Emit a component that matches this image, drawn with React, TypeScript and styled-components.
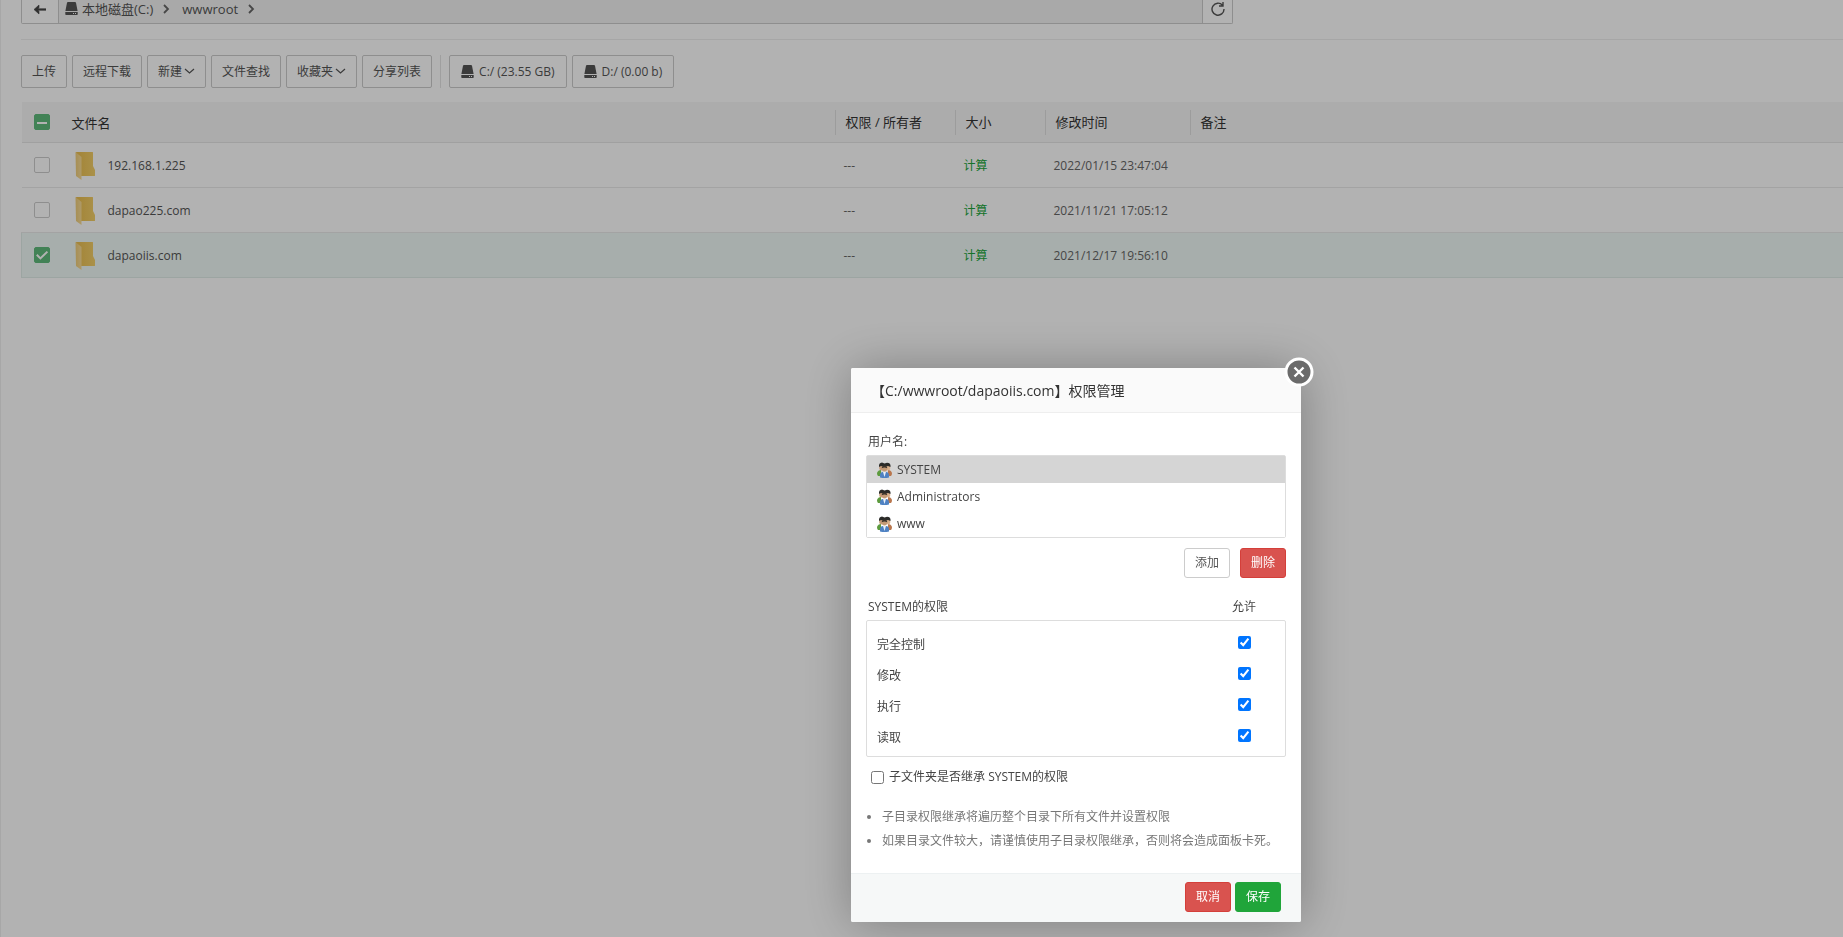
import React, { useState } from 'react';
import styled, { createGlobalStyle, css } from 'styled-components';

const Global = createGlobalStyle`
  * { box-sizing: border-box; }
  body {
    margin: 0;
    background: #fff;
    color: #666;
    font-family: "Open Sans", "Noto Sans CJK SC", sans-serif;
    font-size: 12px;
    line-height: 18px;
  }
  button, input { font: inherit; margin: 0; }
`;

const Page = styled.main`
  min-height: 100vh;
  padding-left: 20px;
  border-left: 1px solid #f0f0f0;
`;

const PathBar = styled.nav`
  display: flex;
  width: 1212px;
  max-width: 100%;
  height: 24px;
  border: 1px solid #ccc;
  border-top: 0;
  border-radius: 0 0 2px 2px;
`;

const PathButton = styled.button<{ $side: 'left' | 'right' }>`
  display: flex;
  justify-content: center;
  width: ${p => (p.$side === 'left' ? 37 : 30)}px;
  padding: 2px 0 0;
  border: 0;
  border-${p => (p.$side === 'left' ? 'right' : 'left')}: 1px solid #ccc;
  background: #fff;
`;

const Crumbs = styled.div`
  display: flex;
  flex: 1;
  align-items: flex-start;
  gap: 4px;
  padding-left: 6px;
  background: #f3f3f3;
  svg { margin-top: 2px; }
`;

const Crumb = styled.a`
  color: #555;
  font-size: 13px;
  text-decoration: none;
`;

const CrumbArrow = styled.svg`
  width: 12px;
  height: 14px;
  margin: 0 6px 0 3px;
`;

const Toolbar = styled.div`
  display: flex;
  gap: 5px;
  margin-top: 15px;
  padding: 15px 0 14px;
  border-top: 1px solid #eee;
`;

const ToolButton = styled.button<{ $drive?: boolean }>`
  display: flex;
  align-items: center;
  gap: ${p => (p.$drive ? 5 : 1)}px;
  height: 33px;
  padding: 0 ${p => (p.$drive ? 11 : 10)}px;
  border: 1px solid #ccc;
  border-radius: 2px;
  background: #fff;
  color: #555;
  white-space: nowrap;
`;

const Divider = styled.span`
  width: 1px;
  margin: 0 3px;
  background: #e4e4e4;
`;

const Files = styled.table`
  width: 100%;
  table-layout: fixed;
  border-collapse: collapse;
`;

const HeadCell = styled.th<{ $ruled?: boolean; $tick?: boolean }>`
  height: 40px;
  padding: ${p => (p.$tick ? '0 0 0 12px' : '2px 0 0')};
  border-bottom: 1px solid #e6e6e6;
  background: #f6f6f6;
  color: #333;
  font-size: 13px;
  font-weight: 400;
  text-align: left;
  ${p => p.$ruled && css`
    span {
      display: block;
      padding-left: 10px;
      border-left: 1px solid #e0e0e0;
      line-height: 25px;
    }
  `}
`;

const FileRow = styled.tr<{ $selected?: boolean }>`
  height: 45px;
  border-bottom: 1px solid #eaeaea;
  ${p => p.$selected && css`
    background: #f0faf6;
    border: 1px solid #e0ece8;
    border-right: 0;
  `}
`;

const Cell = styled.td`
  padding: 2px 0 0 9px;
`;

const TickCell = styled.td`
  padding: 0 0 0 12px;
`;

const NameCell = styled(Cell)`
  padding-left: 3px;
`;

const FileName = styled.div`
  display: flex;
  align-items: center;
  gap: 12px;
  a { color: #555; text-decoration: none; }
`;

const CalcLink = styled.a`
  color: #20a53a;
  text-decoration: none;
`;

const Tick = styled.input`
  display: block;
  appearance: none;
  width: 16px;
  height: 16px;
  border: 1px solid #ccc;
  border-radius: 2px;
  background: #fff center / 14px no-repeat;
  &:checked, &:indeterminate { border-color: #5fbb7c; background-color: #5fbb7c; }
  &:checked { background-image: url("data:image/svg+xml,%3Csvg xmlns='http://www.w3.org/2000/svg' viewBox='0 0 14 14'%3E%3Cpath d='M1.8 6.8L5.4 10.4L12.4 3.6' fill='none' stroke='white' stroke-width='2'/%3E%3C/svg%3E"); }
  &:indeterminate { background-image: url("data:image/svg+xml,%3Csvg xmlns='http://www.w3.org/2000/svg' viewBox='0 0 14 14'%3E%3Cpath d='M2 8H12' stroke='white' stroke-width='2'/%3E%3C/svg%3E"); }
`;

const Overlay = styled.div`
  position: fixed;
  inset: 0;
  background: rgba(0, 0, 0, 0.3);
`;

const Dialog = styled.section`
  position: absolute;
  top: 368px;
  left: 851px;
  width: 450px;
  border-radius: 2px;
  background: #fff;
  box-shadow: 1px 1px 50px rgba(0, 0, 0, 0.3);
  color: #444;
`;

const DialogTitle = styled.h2`
  margin: 0;
  padding: 2px 20px 0;
  border-bottom: 1px solid #eee;
  border-radius: 2px 2px 0 0;
  background: #fafafa;
  color: #333;
  font-size: 14px;
  font-weight: 400;
  line-height: 42px;
`;

const CloseButton = styled.button`
  position: absolute;
  top: -11px;
  right: -13px;
  width: 30px;
  height: 30px;
  padding: 0;
  border: 0;
  background: none;
  svg { display: block; }
`;

const DialogBody = styled.div`
  padding: 20px 15px;
`;

const Caption = styled.div`
  display: flex;
  justify-content: space-between;
  padding: 0 30px 4px 2px;
`;

const UserList = styled.ul`
  margin: 0;
  padding: 0;
  border: 1px solid #ddd;
  border-radius: 2px;
  list-style: none;
`;

const User = styled.li<{ $active?: boolean }>`
  display: flex;
  align-items: center;
  gap: 5px;
  height: 27px;
  padding-left: 10px;
  background: ${p => (p.$active ? '#d5d5d5' : '#fff')};
`;

const Actions = styled.div`
  display: flex;
  justify-content: flex-end;
  gap: 10px;
  padding: 10px 0 20px;
`;

const tones = {
  plain: ['#fff', '#ccc', '#555'],
  danger: ['#d9534f', '#d43f3a', '#fff'],
  primary: ['#20a53a', '#20a53a', '#fff'],
};

const Button = styled.button<{ $tone: keyof typeof tones }>`
  height: 30px;
  padding: 0 10px;
  border: 1px solid ${p => tones[p.$tone][1]};
  border-radius: 3px;
  background: ${p => tones[p.$tone][0]};
  color: ${p => tones[p.$tone][2]};
`;

const Rights = styled.div`
  padding: 8px 34px 3px 10px;
  border: 1px solid #ddd;
  border-radius: 2px;
`;

const Right = styled.label`
  display: flex;
  align-items: center;
  justify-content: space-between;
  height: 31px;
`;

const Check = styled.input`
  width: 13px;
  height: 13px;
  accent-color: #0075ff;
`;

const RightCheck = styled(Check)`
  margin-bottom: 4px;
`;

const Inherit = styled.label`
  display: flex;
  align-items: center;
  gap: 5px;
  padding: 11px 5px 0;
`;

const Notes = styled.ul`
  margin: 19px 0 0;
  padding: 0 0 0 16px;
  color: #777;
  line-height: 24px;
`;

const DialogFooter = styled.footer`
  display: flex;
  justify-content: flex-end;
  gap: 4px;
  padding: 8px 20px 10px;
  border-top: 1px solid #edf1f2;
  border-radius: 0 0 2px 2px;
  background: #f6f8f8;
`;

const DriveIcon = () => (
  <svg width="13" height="13" viewBox="0 0 13 13" aria-hidden="true">
    <path fill="#555" d="M3 0h7q.8 0 1 .8L12.6 9H.4L2 .8Q2.2 0 3 0zM.3 10h12.400v2.300q0 .7-.7.7H1q-.7 0-.7-.7z" />
    <path fill="#fff" d="M8 11h1v1H8zM10 11h1v1h-1z" />
  </svg>
);

const Chevron = () => (
  <svg width="12" height="12" viewBox="0 0 12 12" aria-hidden="true">
    <path d="M2 3l4.500 4L11 3" fill="none" stroke="#555" strokeWidth="1.200" />
  </svg>
);

const Next = () => (
  <CrumbArrow viewBox="0 0 12 14" aria-hidden="true">
    <path d="M4 3l4 4-4 4" fill="none" stroke="#666" strokeWidth="1.800" />
  </CrumbArrow>
);

const FolderIcon = () => (
  <svg width="21" height="30" viewBox="0 0 21 30" aria-hidden="true">
    <defs>
      <linearGradient id="back" x1="0" x2="1"><stop offset="0" stopColor="#e9bd4f" /><stop offset="1" stopColor="#f4d06a" /></linearGradient>
      <linearGradient id="flap" x1="0" x2="1"><stop offset="0" stopColor="#f0cd78" /><stop offset="1" stopColor="#f8dc98" /></linearGradient>
    </defs>
    <path fill="url(#back)" d="M1 1h16.500q.5 0 .5.500V15l2 4v5.500q0 .5-.5.500H6z" />
    <path fill="url(#flap)" d="M.5 1L6.500 6v23L1 25z" />
  </svg>
);

const UsersIcon = () => (
  <svg width="15" height="16" viewBox="0 0 15 16" aria-hidden="true">
    <path fill="#5d9b3e" d="M0 11q1-3 4-3v6H1q-1-1-1-3z" />
    <path fill="#b9774e" d="M15 11q-1-3-4-3v6h3q1-1 1-3z" />
    <circle cx="4.500" cy="6" r="2.400" fill="#c79b78" />
    <circle cx="11" cy="6" r="2.400" fill="#d8b08c" />
    <path fill="#2b2b29" d="M2 5Q1.500 1 5 .6L7.500 1.500 10 .8q4 0 3.500 4.200L11 4 7.500 5 4 4z" />
    <circle cx="7.500" cy="6.800" r="2.700" fill="#c49a75" />
    <path fill="#3c342c" d="M4.700 6.200Q5 3.500 7.500 3.500t2.800 2.700Q7.500 5 4.700 6.200z" />
    <path fill="#4f82c3" d="M3 15.500q-.5-5.500 3-5.500h3q3.500 0 3 5.500-4.500 1-9 0z" />
    <path fill="#e9f0fa" d="M6 10h3l-1.500 5z" />
  </svg>
);

const files = [
  { name: '192.168.1.225', time: '2022/01/15 23:47:04' },
  { name: 'dapao225.com', time: '2021/11/21 17:05:12' },
  { name: 'dapaoiis.com', time: '2021/12/17 19:56:10' },
];

const users = ['SYSTEM', 'Administrators', 'www'];
const rights = ['完全控制', '修改', '执行', '读取'];

export default function App() {
  const [selected, setSelected] = useState<string[]>(['dapaoiis.com']);
  const [user, setUser] = useState('SYSTEM');
  const toggle = (name: string) =>
    setSelected(s => (s.includes(name) ? s.filter(n => n !== name) : [...s, name]));
  const all = selected.length === files.length;

  return (
    <>
      <Global />
      <Page>
        <PathBar>
          <PathButton $side="left" aria-label="后退">
            <svg width="14" height="14" viewBox="0 0 14 14" aria-hidden="true">
              <path d="M13 7.500H4" stroke="#444" strokeWidth="2.200" />
              <path d="M1 7.500L6 3v2.600L4.500 7.500 6 9.400V12z" fill="#444" stroke="#444" strokeWidth=".6" />
            </svg>
          </PathButton>
          <Crumbs>
            <DriveIcon />
            <Crumb href="#c">本地磁盘(C:)</Crumb>
            <Next />
            <Crumb href="#wwwroot">wwwroot</Crumb>
            <Next />
          </Crumbs>
          <PathButton $side="right" aria-label="刷新">
            <svg width="14" height="14" viewBox="0 0 14 14" aria-hidden="true">
              <path d="M11.500 3.200A6 6 0 1 0 13 7M12 0v4H8" fill="none" stroke="#555" strokeWidth="1.400" />
            </svg>
          </PathButton>
        </PathBar>
        <Toolbar>
          <ToolButton>上传</ToolButton>
          <ToolButton>远程下载</ToolButton>
          <ToolButton>新建<Chevron /></ToolButton>
          <ToolButton>文件查找</ToolButton>
          <ToolButton>收藏夹<Chevron /></ToolButton>
          <ToolButton>分享列表</ToolButton>
          <Divider />
          <ToolButton $drive><DriveIcon />C:/ (23.55 GB)</ToolButton>
          <ToolButton $drive><DriveIcon />D:/ (0.00 b)</ToolButton>
        </Toolbar>
        <Files>
          <colgroup>
            <col width="50" /><col width="763" /><col width="120" /><col width="90" /><col width="145" /><col />
          </colgroup>
          <thead>
            <tr>
              <HeadCell $tick>
                <Tick
                  type="checkbox"
                  aria-label="全选"
                  checked={all}
                  ref={el => { if (el) el.indeterminate = selected.length > 0 && !all; }}
                  onChange={() => setSelected(all ? [] : files.map(f => f.name))}
                />
              </HeadCell>
              <HeadCell>文件名</HeadCell>
              <HeadCell $ruled><span>权限 / 所有者</span></HeadCell>
              <HeadCell $ruled><span>大小</span></HeadCell>
              <HeadCell $ruled><span>修改时间</span></HeadCell>
              <HeadCell $ruled><span>备注</span></HeadCell>
            </tr>
          </thead>
          <tbody>
            {files.map(f => (
              <FileRow key={f.name} $selected={selected.includes(f.name)}>
                <TickCell>
                  <Tick type="checkbox" aria-label={f.name} checked={selected.includes(f.name)} onChange={() => toggle(f.name)} />
                </TickCell>
                <NameCell><FileName><FolderIcon /><a href="#open">{f.name}</a></FileName></NameCell>
                <Cell>---</Cell>
                <Cell><CalcLink href="#size">计算</CalcLink></Cell>
                <Cell>{f.time}</Cell>
                <Cell />
              </FileRow>
            ))}
          </tbody>
        </Files>
      </Page>
      <Overlay>
        <Dialog role="dialog" aria-labelledby="dialog-title">
          <DialogTitle id="dialog-title">【C:/wwwroot/dapaoiis.com】权限管理</DialogTitle>
          <CloseButton aria-label="关闭">
            <svg width="30" height="30" viewBox="0 0 30 30" aria-hidden="true">
              <circle cx="15" cy="15" r="13" fill="#6b6b6b" stroke="#fff" strokeWidth="3" />
              <path d="M10.500 10.500l9 9M19.500 10.500l-9 9" stroke="#fff" strokeWidth="2.400" />
            </svg>
          </CloseButton>
          <DialogBody>
            <Caption>用户名:</Caption>
            <UserList role="listbox" aria-label="用户名">
              {users.map(u => (
                <User key={u} role="option" tabIndex={0} aria-selected={u === user} $active={u === user} onClick={() => setUser(u)}>
                  <UsersIcon />{u}
                </User>
              ))}
            </UserList>
            <Actions>
              <Button $tone="plain">添加</Button>
              <Button $tone="danger">删除</Button>
            </Actions>
            <Caption><span>{user}的权限</span><span>允许</span></Caption>
            <Rights>
              {rights.map(r => (
                <Right key={r}>{r}<RightCheck type="checkbox" defaultChecked /></Right>
              ))}
            </Rights>
            <Inherit><Check type="checkbox" />子文件夹是否继承 {user}的权限</Inherit>
            <Notes>
              <li>子目录权限继承将遍历整个目录下所有文件并设置权限</li>
              <li>如果目录文件较大，请谨慎使用子目录权限继承，否则将会造成面板卡死。</li>
            </Notes>
          </DialogBody>
          <DialogFooter>
            <Button $tone="danger">取消</Button>
            <Button $tone="primary">保存</Button>
          </DialogFooter>
        </Dialog>
      </Overlay>
    </>
  );
}
